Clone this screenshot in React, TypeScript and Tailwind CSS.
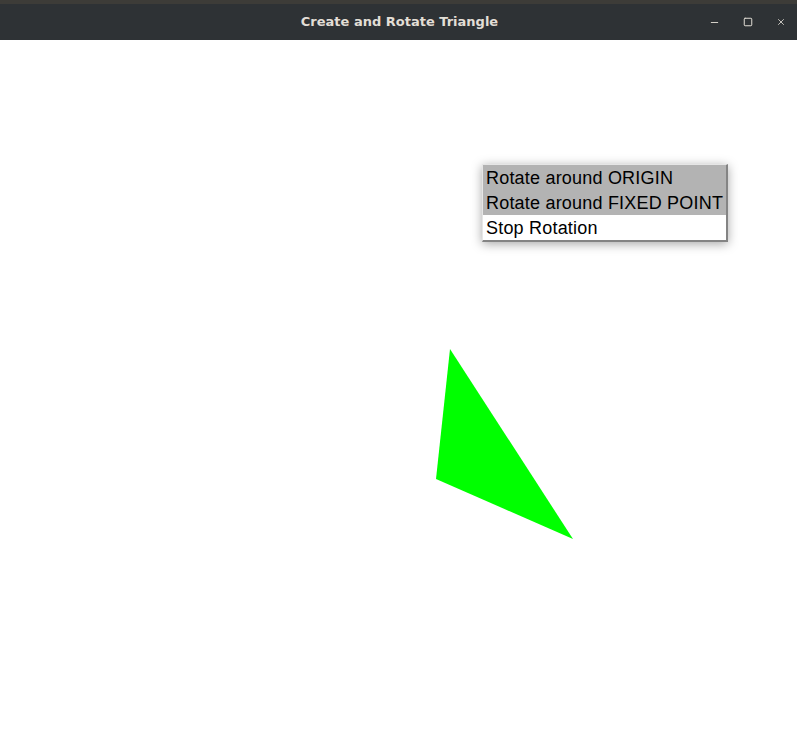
import { Minus, Square, X } from "lucide-react"

const menuItems = [
  { label: "Rotate around ORIGIN", active: true },
  { label: "Rotate around FIXED POINT", active: true },
  { label: "Stop Rotation", active: false },
]

function TitleBar() {
  return (
    <header className="flex h-10 flex-col bg-[#2e3235]">
      <div className="h-1 bg-[#3d3c38]" />
      <div className="relative flex flex-1 items-center justify-center">
        <span className="pl-[2px] font-['DejaVu_Sans',sans-serif] text-[13px] font-bold text-[#e2ded6]">
          Create and Rotate Triangle
        </span>
        <div className="absolute right-0 top-0 flex h-full items-center gap-[23px] pr-[11px] text-[#e2ded6]">
          <Minus className="size-[11px]" strokeWidth={2} />
          <Square className="size-[10px]" strokeWidth={2.4} />
          <X className="size-[10px]" strokeWidth={2} />
        </div>
      </div>
    </header>
  )
}

function PopupMenu() {
  return (
    <div className="absolute left-[482px] top-[124px] w-[246px] border-t border-l border-t-[#e6e6e6] border-l-[#e6e6e6] border-r-2 border-b-2 border-r-[#848484] border-b-[#848484] bg-white shadow-[0_2px_10px_rgba(0,0,0,0.35)]">
      {menuItems.map((item) => (
        <div
          key={item.label}
          className={`flex h-[25px] items-center pl-[3px] font-['Liberation_Sans',Arial,sans-serif] text-[18px] leading-none tracking-[0.2px] text-black ${
            item.active ? "bg-[#b3b3b3]" : "bg-white"
          }`}
        >
          {item.label}
        </div>
      ))}
    </div>
  )
}

export default function App() {
  return (
    <div className="flex h-[744px] w-[797px] flex-col overflow-hidden bg-white">
      <TitleBar />
      <main className="relative flex-1 bg-white">
        <svg className="absolute inset-0" width="797" height="704" viewBox="0 40 797 704">
          <polygon points="450,349 436,479 573,539" fill="#00ff00" />
        </svg>
        <PopupMenu />
      </main>
    </div>
  )
}
